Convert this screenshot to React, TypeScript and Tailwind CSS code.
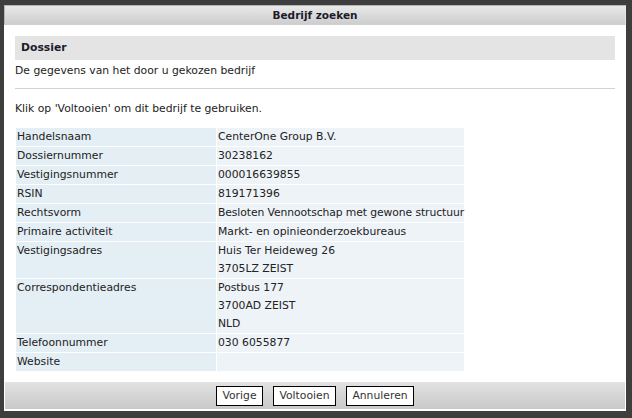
import React from "react";

const rows: [string, string[]][] = [
  ["Handelsnaam", ["CenterOne Group B.V."]],
  ["Dossiernummer", ["30238162"]],
  ["Vestigingsnummer", ["000016639855"]],
  ["RSIN", ["819171396"]],
  ["Rechtsvorm", ["Besloten Vennootschap met gewone structuur"]],
  ["Primaire activiteit", ["Markt- en opinieonderzoekbureaus"]],
  ["Vestigingsadres", ["Huis Ter Heideweg 26", "3705LZ ZEIST"]],
  ["Correspondentieadres", ["Postbus 177", "3700AD ZEIST", "NLD"]],
  ["Telefoonnummer", ["030 6055877"]],
  ["Website", [""]],
];

export default function App() {
  return (
    <div
      className="w-[632px] h-[418px] bg-[#3e3e3e] pt-[5px] pl-[4px] overflow-hidden text-[10.8px] text-[#222] leading-[18px]"
      style={{ fontFamily: '"DejaVu Sans", Verdana, sans-serif' }}
    >
      <div className="w-[622px] h-[406px] bg-white flex flex-col">
        <div className="h-[20px] shrink-0 bg-gradient-to-b from-[#e9e9e9] to-[#cdcdcd] border border-[#b5b5b5] border-r-[#e6e6e6] border-b-[#cfcfcf] flex items-center justify-center font-bold text-[10.5px] text-[#1b1b2b]">
          Bedrijf zoeken
        </div>
        <div className="flex-1 px-[11px] pt-[11px]">
          <div className="h-[24px] bg-[#e4e4e4] pl-[6px] flex items-center font-bold text-[#1b1b2b]">
            Dossier
          </div>
          <div className="mt-[2px]">De gegevens van het door u gekozen bedrijf</div>
          <div className="mt-[8px] border-t border-[#d3d3d3]" />
          <div className="mt-[11px]">Klik op 'Voltooien' om dit bedrijf te gebruiken.</div>
          <div className="mt-[10px] grid grid-cols-[200px_247px] gap-[1px] ml-[1px]">
            {rows.map(([label, values]) => (
              <React.Fragment key={label}>
                <div className="bg-[#e4eef5] pl-[1px] min-h-[18px]">{label}</div>
                <div className="bg-[#eef3f8] pl-[1px] min-h-[18px] whitespace-nowrap">
                  {values.map((v, i) => (
                    <div key={i} className={i === 0 && label === "Rechtsvorm" ? "h-[18px] tracking-[-0.1px]" : "h-[18px]"}>
                      {v}
                    </div>
                  ))}
                </div>
              </React.Fragment>
            ))}
          </div>
        </div>
        <div className="h-[27px] mx-[1px] mb-[2px] shrink-0 bg-gradient-to-b from-[#e2e2e2] to-[#c9c9c9] flex items-center gap-[10px] pl-[211px]">
          <div className="w-[47px] h-[20px] border border-black bg-white flex items-center justify-center text-[#333]">
            Vorige
          </div>
          <div className="w-[63px] h-[20px] border border-black bg-white flex items-center justify-center text-[#333]">
            Voltooien
          </div>
          <div className="w-[68px] h-[20px] border border-black bg-white flex items-center justify-center text-[#333]">
            Annuleren
          </div>
        </div>
      </div>
    </div>
  );
}
